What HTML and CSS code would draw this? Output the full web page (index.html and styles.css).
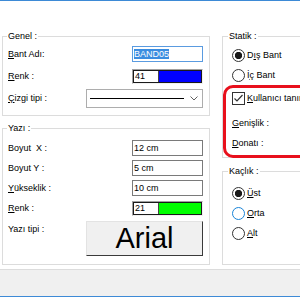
FILE: index.html
```html
<!DOCTYPE html>
<html>
<head>
  <meta charset="utf-8">
  <title>Bant Özellikleri</title>
  <link rel="stylesheet" href="styles.css">
</head>
<body>
  <div class="window">
    <div class="content">
      <div class="column">
        <fieldset class="group genel">
          <legend>Genel :</legend>
          <div class="row">
            <span class="label"><u>B</u>ant Adı:</span>
            <span class="textbox focused"><span class="selected">BAND05</span></span>
          </div>
          <div class="row">
            <span class="label"><u>R</u>enk :</span>
            <span class="colorbox">
              <span class="colorbox-inner">
                <span class="colorbox-value">41</span>
                <span class="colorbox-swatch blue"></span>
              </span>
            </span>
          </div>
          <div class="row">
            <span class="label"><u>Ç</u>izgi tipi :</span>
            <span class="combo">
              <span class="combo-line"></span>
              <svg class="chevron" width="8" height="5" viewBox="0 0 8 5">
                <polyline points="0.5,0.5 4,4 7.5,0.5" fill="none" stroke="#606060" stroke-width="1"/>
              </svg>
            </span>
          </div>
        </fieldset>

        <fieldset class="group yazi">
          <legend>Yazı :</legend>
          <div class="row">
            <span class="label">Boyut&nbsp; X :</span>
            <span class="textbox">12 cm</span>
          </div>
          <div class="row">
            <span class="label">Boyut Y :</span>
            <span class="textbox">5 cm</span>
          </div>
          <div class="row">
            <span class="label"><u>Y</u>ükseklik :</span>
            <span class="textbox">10 cm</span>
          </div>
          <div class="row">
            <span class="label"><u>R</u>enk :</span>
            <span class="colorbox">
              <span class="colorbox-inner">
                <span class="colorbox-value">21</span>
                <span class="colorbox-swatch green"></span>
              </span>
            </span>
          </div>
          <div class="row font-row">
            <span class="label">Yazı tipi :</span>
            <span class="font-button">Arial</span>
          </div>
        </fieldset>
      </div>

      <div class="column">
        <fieldset class="group statik">
          <legend>Statik :</legend>
          <div class="option"><span class="radio checked"></span><span>D<u>ı</u>ş Bant</span></div>
          <div class="option"><span class="radio"></span><span>İ<u>ç</u> Bant</span></div>
          <div class="highlight">
            <div class="option">
              <span class="checkbox">
                <svg width="11" height="11" viewBox="0 0 11 11">
                  <polyline points="1.5,5.5 4,8 9.5,2" fill="none" stroke="#333" stroke-width="1.2"/>
                </svg>
              </span>
              <span><u>K</u>ullanıcı tanımlı</span>
            </div>
            <div class="option spaced"><span><u>G</u>enişlik :</span></div>
            <div class="option"><span><u>D</u>onatı :</span></div>
          </div>
        </fieldset>

        <fieldset class="group kaclik">
          <legend>Kaçlık :</legend>
          <div class="option"><span class="radio checked"></span><span><u>Ü</u>st</span></div>
          <div class="option"><span class="radio hover"></span><span><u>O</u>rta</span></div>
          <div class="option"><span class="radio"></span><span><u>A</u>lt</span></div>
        </fieldset>
      </div>
    </div>
    <div class="footer"></div>
  </div>
</body>
</html>
```

FILE: styles.css
```css
html, body {
  margin: 0;
  background: #fff;
}
body {
  font-family: "Liberation Sans", Arial, sans-serif;
  font-size: 9px;
  color: #000;
}
u {
  text-underline-offset: 1px;
}
.window {
  width: 300px;
  height: 300px;
  overflow: hidden;
  border-top: 1px solid #3d8ad6;
  box-sizing: border-box;
  background: #fff;
}
.content {
  height: 268px;
  padding: 30px 0 0 2px;
  box-sizing: border-box;
  display: grid;
  grid-template-columns: 208px 110px;
  column-gap: 12px;
}
.footer {
  height: 26px;
  background: #f0f0f0;
  border-top: 1px solid #dcdcdc;
  border-bottom: 1px solid #3d8ad6;
}

/* group boxes */
.group {
  margin: 0;
  padding: 0 6px 0 5px;
  border: 1px solid #dcdcdc;
  min-width: 0;
}
.group legend {
  padding: 0 1px;
  margin-left: -1px;
  line-height: 11px;
}
.genel {
  padding-top: 1px;
  padding-bottom: 6px;
}
.yazi {
  margin-top: 7px;
  padding-top: 4px;
  padding-bottom: 8px;
}
.statik {
  padding: 3px 0 0 9px;
}
.kaclik {
  margin-top: 8px;
  padding: 6px 0 21px 9px;
}
.statik legend, .kaclik legend {
  margin-left: -4px;
}

/* rows */
.row {
  display: flex;
  align-items: center;
  height: 22px;
}
.yazi .row {
  height: 20px;
}
.yazi .font-row {
  height: 38px;
  align-items: flex-start;
}
.label {
  flex: 1;
  white-space: nowrap;
}
.font-row .label {
  padding-top: 6px;
}

.textbox {
  width: 71px;
  height: 16px;
  box-sizing: border-box;
  border: 1px solid #7a7a7a;
  padding-left: 1px;
  line-height: 14px;
  white-space: nowrap;
  background: #fff;
}
.textbox.focused {
  border-color: #5a9be0;
}
.selected {
  background: #3b8de0;
  color: #fff;
}

.colorbox {
  width: 71px;
  height: 15px;
  box-sizing: border-box;
  border: 1px solid;
  border-color: #a0a0a0 #f0f0f0 #f0f0f0 #a0a0a0;
}
.colorbox-inner {
  display: flex;
  height: 100%;
  box-sizing: border-box;
  border: 1px solid #1a1a1a;
}
.colorbox-value {
  width: 23px;
  padding-left: 1px;
  line-height: 11px;
  background: #fff;
}
.colorbox-swatch {
  flex: 1;
  border-left: 1px solid #444;
}
.blue {
  background: #0000ff;
}
.green {
  background: #00ff00;
}

.combo {
  width: 117px;
  height: 19px;
  box-sizing: border-box;
  border: 1px solid #adadad;
  display: flex;
  align-items: center;
  padding: 0 4px 0 3px;
  background: #fff;
}
.combo-line {
  flex: 1;
  height: 1px;
  background: #000;
  margin-right: 6px;
}
.chevron {
  display: block;
}

.font-button {
  margin-top: 3px;
  width: 117px;
  height: 35px;
  box-sizing: border-box;
  border: 1px solid;
  border-color: #e3e3e3 #3a3a3a #3a3a3a #e3e3e3;
  background: #f0f0f0;
  font-size: 29px;
  line-height: 33px;
  text-align: center;
}

/* right column */
.option {
  display: flex;
  align-items: center;
  height: 20px;
  white-space: nowrap;
}
.option.spaced {
  margin-top: 5px;
}
.radio {
  width: 13px;
  height: 13px;
  box-sizing: border-box;
  border: 1px solid #333;
  border-radius: 50%;
  margin-right: 2px;
  flex: none;
  background: #fff;
}
.radio.checked {
  background: radial-gradient(circle, #1a1a1a 0 3.4px, #fff 3.9px);
}
.radio.hover {
  border-color: #1883d7;
}
.checkbox {
  width: 13px;
  height: 13px;
  box-sizing: border-box;
  border: 1px solid #333;
  margin-right: 2px;
  flex: none;
  display: flex;
  align-items: center;
  justify-content: center;
}
.checkbox svg {
  display: block;
}
.highlight {
  margin: 0 -40px -1px -9px;
  padding: 0 0 2px 6px;
  border: 3px solid #e8101c;
  border-radius: 10px;
}
```
